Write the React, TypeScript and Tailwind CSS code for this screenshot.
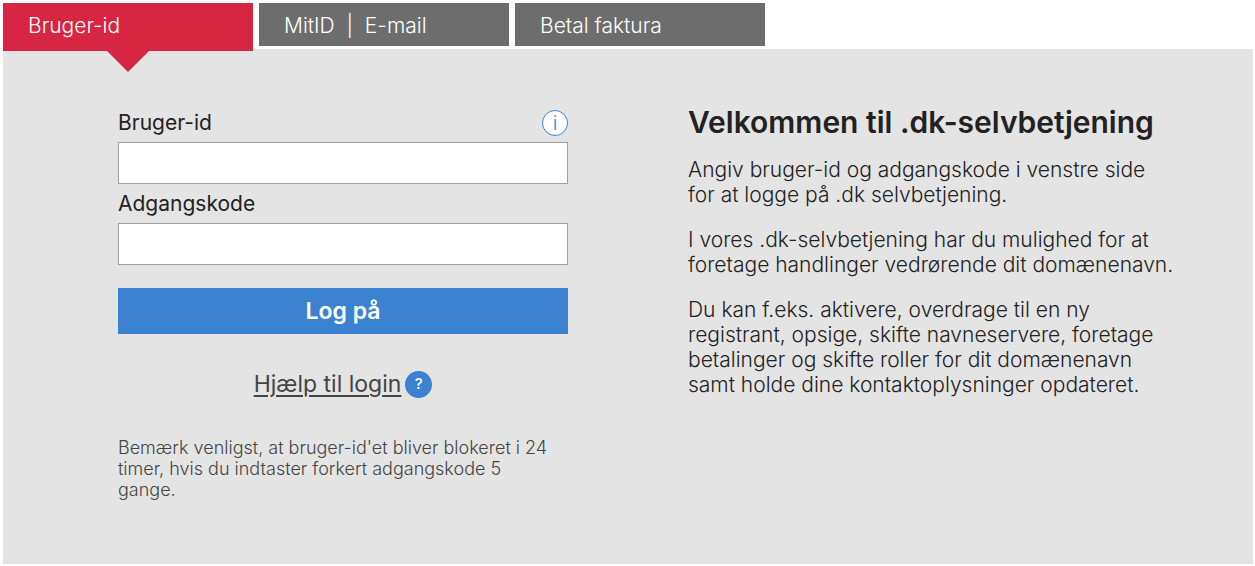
import { useState } from 'react';
import clsx from 'clsx';

interface TextFieldProps {
  id: string;
  label: string;
  type?: 'text' | 'password';
  /** Show the round info button next to the label */
  info?: boolean;
}

const tabs = ['Bruger-id', 'MitID \u00a0|\u00a0 E-mail', 'Betal faktura'];

const paragraphs = [
  'Angiv bruger-id og adgangskode i venstre side for at logge på .dk selvbetjening.',
  'I vores .dk-selvbetjening har du mulighed for at foretage handlinger vedrørende dit domænenavn.',
  'Du kan f.eks. aktivere, overdrage til en ny registrant, opsige, skifte navneservere, foretage betalinger og skifte roller for dit domænenavn samt holde dine kontaktoplysninger opdateret.',
];

function TextField({ id, label, type = 'text', info = false }: TextFieldProps) {
  return (
    <div>
      <div className="flex h-[38px] items-center justify-between">
        <label htmlFor={id} className="text-[21px] leading-6 text-[#222]">
          {label}
        </label>
        {info && (
          <button
            type="button"
            aria-label="Info"
            className="flex size-[26px] items-center justify-center rounded-full border border-[#3b82d0] bg-white text-[20px] leading-6 font-light text-[#3b82d0]"
          >
            i
          </button>
        )}
      </div>
      <input
        id={id}
        name={id}
        type={type}
        className="block h-[42px] w-full border border-[#a0a0a0] bg-white px-3 text-[21px]"
      />
    </div>
  );
}

function LoginForm() {
  return (
    <form onSubmit={(e) => e.preventDefault()}>
      <div className="space-y-px">
        <TextField id="userid" label="Bruger-id" info />
        <TextField id="password" label="Adgangskode" type="password" />
      </div>

      <button
        type="submit"
        className="mt-[23px] block h-[46px] w-full bg-[#3b82d0] text-[23px] font-semibold text-white"
      >
        Log på
      </button>

      <div className="mt-9 flex items-center justify-center gap-1">
        <a href="#help" className="text-[23px] leading-7 text-[#444] underline decoration-2 underline-offset-3">
          Hjælp til login
        </a>
        <button
          type="button"
          aria-label="Hjælp"
          className="flex size-[27px] items-center justify-center rounded-full bg-[#3b82d0] text-[15px] font-medium text-white"
        >
          ?
        </button>
      </div>

      <p className="mt-[39px] pr-3 text-[18px] leading-[21px] font-light text-[#444]">
        Bemærk venligst, at bruger-id&apos;et bliver blokeret i 24 timer, hvis du indtaster forkert
        adgangskode 5 gange.
      </p>
    </form>
  );
}

export default function App() {
  const [active, setActive] = useState(0);

  return (
    <div className="min-h-screen bg-white pt-[3px] pr-[2px] pl-[3px] font-['Inter',sans-serif]">
      <nav className="flex h-[46px] items-start gap-[6px]">
        {tabs.map((tab, i) => (
          <button
            key={tab}
            type="button"
            onClick={() => setActive(i)}
            className={clsx(
              'relative w-[250px] px-[25px] text-left text-[21px] font-light text-white',
              i === active ? 'h-12 bg-[#d72641]' : 'h-[43px] bg-[#6d6d6d]'
            )}
          >
            <span className="block h-12 leading-[46px]">{tab}</span>
            {/* Pointer below the selected tab */}
            {i === active && (
              <svg
                viewBox="0 0 42 21"
                className="absolute top-full left-1/2 h-[21px] w-[42px] -translate-x-1/2 fill-[#d72641]"
              >
                <path d="M0 0h42L21 21z" />
              </svg>
            )}
          </button>
        ))}
      </nav>

      <main className="grid grid-cols-2 bg-[#e4e4e4] pt-[55px] pb-16">
        <div className="pr-[60px] pl-[115px]">
          <LoginForm />
        </div>
        <section className="pr-[78px] pl-[60px] text-[#222]">
          <h1 className="text-[30px] leading-9 font-semibold">Velkommen til .dk-selvbetjening</h1>
          <div className="mt-[17px] space-y-5 text-[21px] leading-[25px] font-light">
            {paragraphs.map((text) => (
              <p key={text}>{text}</p>
            ))}
          </div>
        </section>
      </main>
    </div>
  );
}
